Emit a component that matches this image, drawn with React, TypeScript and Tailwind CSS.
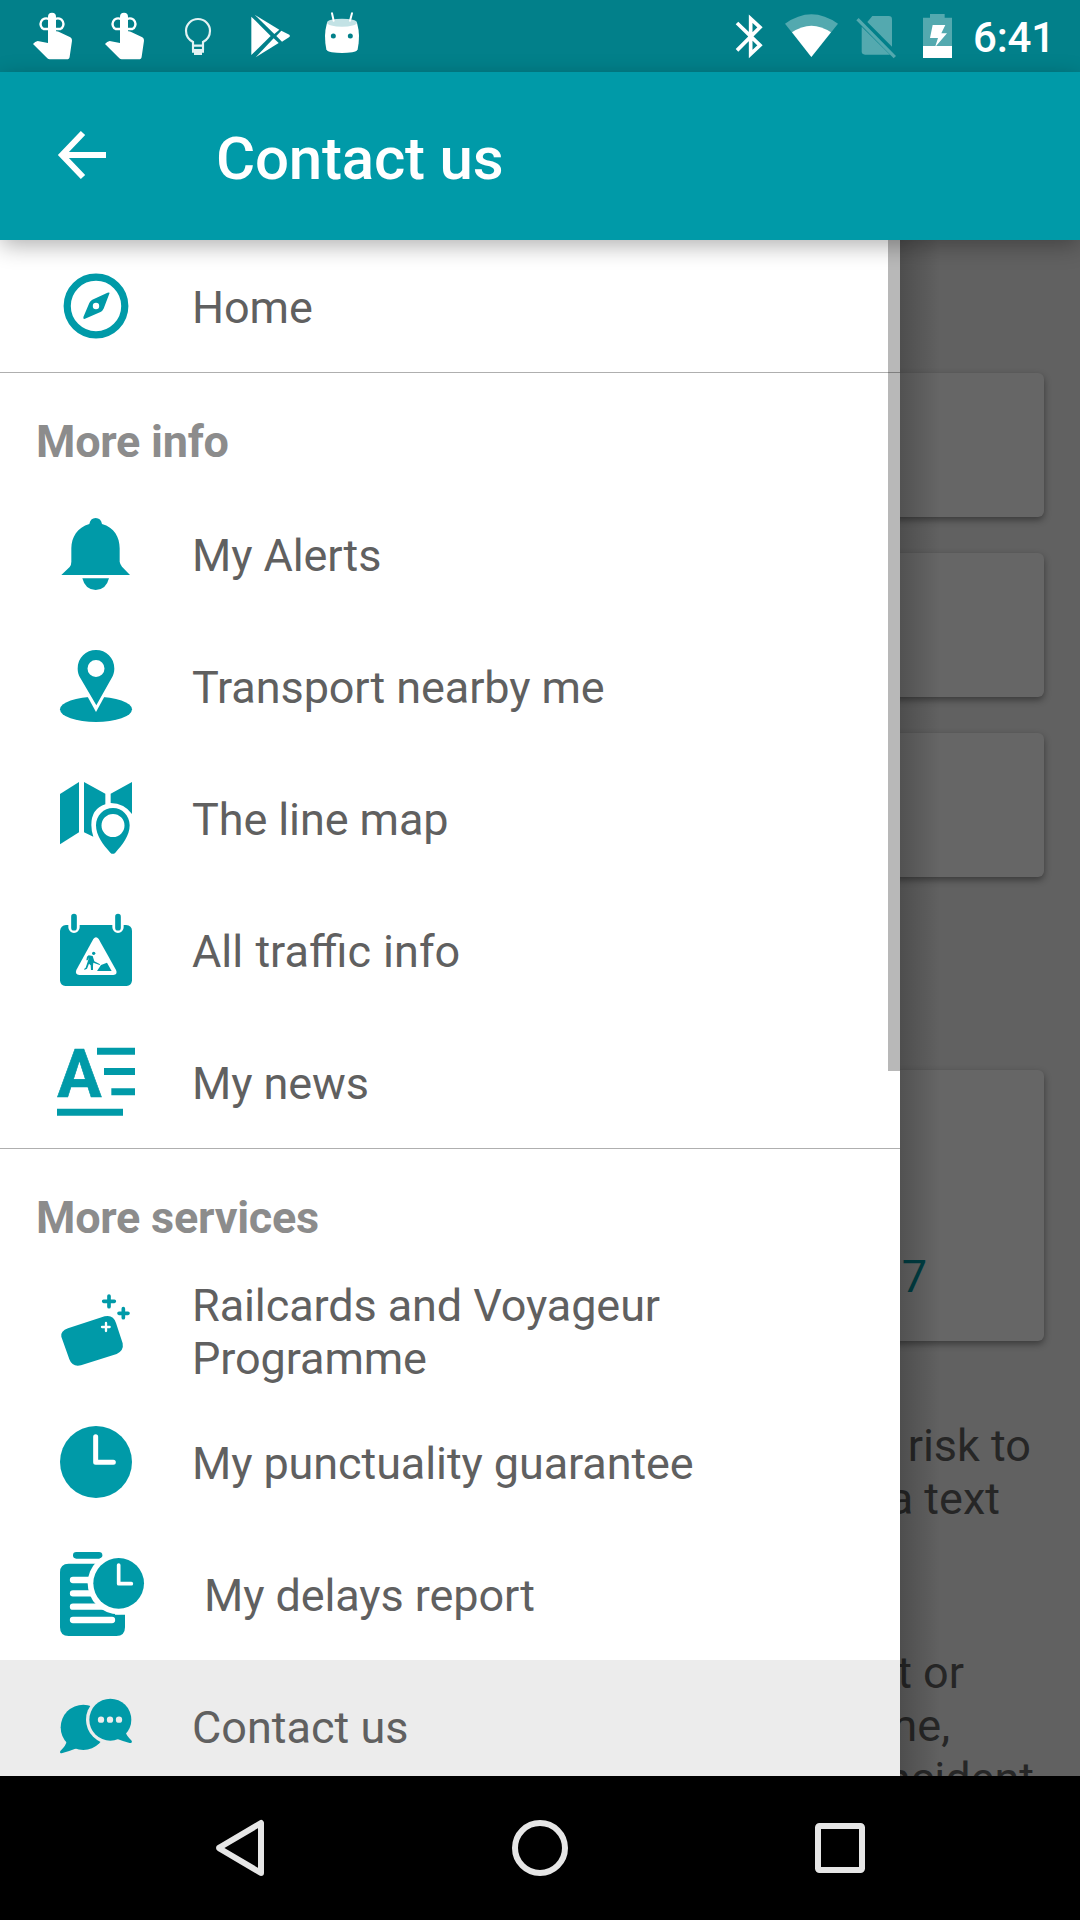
import type { ReactNode } from "react";

const TEAL = "#009aa8";

function StatusIcon({ box, className, children }: { box: string; className: string; children: ReactNode }) {
  return (
    <svg viewBox={box} className={className} fill="#fff">
      {children}
    </svg>
  );
}

const reminder = (
  <>
    <path d="M144 50Q144 38 156 38Q168 38 168 50V94Q172 93 176 95L211 112Q217 116 216 122L209 170Q208 178 200 178H149Q145 178 142 175L99 132Q105 124 113 123L144 129Z" />
    <path
      d="M146 87H131A15.500 15.500 0 1 1 146 57M166 87H181A15.500 15.500 0 1 0 166 57"
      fill="none"
      stroke="#fff"
      strokeWidth="7"
    />
  </>
);

function StatusBar() {
  return (
    <div className="flex h-[72px] shrink-0 items-center bg-[#02808a] pl-[18px]">
      <StatusIcon box="54 0 216 216" className="size-[72px]">{reminder}</StatusIcon>
      <StatusIcon box="54 0 216 216" className="size-[72px]">{reminder}</StatusIcon>
      <StatusIcon box="486 0 216 216" className="size-[72px]">
        <g fill="none" stroke="#e3f2f3" strokeWidth="6.500">
          <path d="M579 150V126Q558 114 558 92A36 35 0 0 1 630 92Q630 114 609 126V150" />
          <path d="M578 137H610M576 150H612" />
        </g>
        <path d="M576 148H612V158H606V165H582V158H576Z" fill="#e3f2f3" />
      </StatusIcon>
      <StatusIcon box="702 0 216 216" className="size-[72px]">
        <path d="M754 50L812 108L754 165Z" />
        <path d="M764 44L838 89L823 102Z" />
        <path d="M844 92L868 104Q872 108 868 111L846 125L829 108Z" />
        <path d="M821 115L836 129L767 172Z" />
      </StatusIcon>
      <StatusIcon box="918 0 216 216" className="size-[72px]">
        <path d="M981 68Q975 90 975 108Q975 130 979 148Q982 155 995 157Q1026 161 1057 157Q1070 155 1073 148Q1077 130 1077 108Q1077 90 1071 68Z" />
        <ellipse cx="1026" cy="68" rx="45" ry="12" fill="#c3e2e5" />
        <path d="M996 40L1001 62M1056 40L1050 62" stroke="#fff" strokeWidth="6" strokeLinecap="round" />
        <circle cx="1000" cy="108" r="7.5" fill="#02808a" />
        <circle cx="1051" cy="108" r="7.5" fill="#02808a" />
      </StatusIcon>

      <StatusIcon box="90 0 132 216" className="ml-[352px] h-[72px] w-[44px]">
        <path
          d="M111 69L180 136L152 162V56L180 82L111 151"
          fill="none"
          stroke="#fff"
          strokeWidth="11"
        />
      </StatusIcon>
      <StatusIcon box="222 0 222 216" className="h-[72px] w-[74px]">
        <path d="M255 71Q334 14 414 71L334 171Z" opacity=".32" />
        <path d="M276 97Q334 57 393 97L334 171Z" />
      </StatusIcon>
      <StatusIcon box="444 0 186 216" className="h-[72px] w-[62px]">
        <g opacity=".32">
          <path d="M517 48H566Q576 48 576 58V140L502 66Z" />
          <path d="M485 80L570 164H495Q485 164 485 154Z" />
          <path d="M469 61L476 54L588 168L581 175Z" />
        </g>
      </StatusIcon>
      <StatusIcon box="630 0 168 216" className="h-[72px] w-[56px]">
        <path d="M669 53H690V42H734V53H756V138H669Z" opacity=".32" />
        <path d="M669 138H756V174H669Z" />
        <path d="M698 75H736L724 100H741L705 142L714 114H690Z" />
      </StatusIcon>
      <span className="ml-[7px] pt-[2px] text-[42px] leading-[49px] font-medium tracking-[-0.2px] text-white">6:41</span>
    </div>
  );
}

function AppBar() {
  return (
    <header className="relative z-20 flex h-[168px] shrink-0 items-center bg-[#009aa8] shadow-[0_6px_22px_-1px_rgba(0,0,0,0.32)]">
      <svg viewBox="0 0 50 52" className="mt-[-2px] ml-[57px] h-[52px] w-[50px]">
        <path d="M49 26H6M26 4L5 26L26 48" fill="none" stroke="#fff" strokeWidth="6" />
      </svg>
      <h1 className="ml-[109px] pt-[6px] text-[60px] leading-[70px] font-medium tracking-[-0.2px] text-white">Contact us</h1>
    </header>
  );
}

function MenuIcon({ box, className = "size-[72px]", children }: { box: string; className?: string; children: ReactNode }) {
  return (
    <svg viewBox={box} className={className + " shrink-0 overflow-visible"} fill={TEAL}>
      {children}
    </svg>
  );
}

const icons = {
  home: (
    <MenuIcon box="0 0 72 72">
      <circle cx="36" cy="36" r="28.8" fill="none" stroke={TEAL} strokeWidth="7.2" />
      <path
        fillRule="evenodd"
        d="M49.5 23.2L43.7 38.5Q42.6 41 40.5 41.9L25 48.8Q22.8 49.3 23.4 47L29.3 33Q30.2 31 32.3 29.8L47.5 22.8Q49.8 22 49.5 23.2ZM36 32.8A3.2 3.2 0 1 0 36 39.2A3.2 3.2 0 1 0 36 32.8Z"
      />
    </MenuIcon>
  ),
  alerts: (
    <MenuIcon box="180 474 216 216">
      <path d="M268 492Q271 474 287 474Q303 474 306 492C343 502 359 532 359 565V605Q360 612 366 620L390 645H184L209 621Q214 615 214 605V565C214 532 232 502 268 492Z" />
      <path d="M247 655H327Q318 690 287 690Q256 690 247 655Z" />
    </MenuIcon>
  ),
  nearby: (
    <MenuIcon box="180 870 216 216">
      <ellipse cx="288" cy="1048" rx="108" ry="38" />
      <path d="M258 1001L288 1056L318 1001Z" fill="#fff" />
      <path
        fillRule="evenodd"
        d="M288 870C318 870 343 893 343 926C343 938 339 947 335 954L289 1036L241 954C236 945 233 937 233 926C233 893 258 870 288 870ZM288 900A25.500 25.500 0 1 0 288 951A25.500 25.500 0 1 0 288 900Z"
      />
    </MenuIcon>
  ),
  map: (
    <MenuIcon box="180 126 216 216">
      <path d="M180 162L237 126V277L180 313Z" />
      <path d="M252 126L316 161V193Q274 206 274 255Q274 273 280 290L252 277Z" />
      <path d="M332 161L396 126V222Q373 190 332 189Z" />
      <path
        fillRule="evenodd"
        d="M339 204C366 204 389 226 389 256C389 286 368 315 346 338Q338 345 331 338C309 315 288 286 288 256C288 226 311 204 339 204ZM339 222A34.500 34.500 0 1 0 339 291A34.500 34.500 0 1 0 339 222Z"
      />
    </MenuIcon>
  ),
  traffic: (
    <MenuIcon box="180 522 216 216">
      <path d="M198 555H205V562A17 17 0 0 0 239 562V555H337V562A17 17 0 0 0 371 562V555H378Q396 557 396 573V722Q394 736 380 738H196Q182 736 180 722V573Q182 557 198 555Z" />
      <path d="M222 530V563M354 530V563" stroke={TEAL} strokeWidth="17" strokeLinecap="round" />
      <path d="M280 597Q288 586 296 597L348 690Q354 703 340 705H238Q224 703 229 690Z" fill="#fff" />
      <circle cx="281" cy="640" r="5" />
      <path d="M266 646L278 648L283 664L300 673L299 675L280 668L279 677V690H273L272 676L267 671L261 686L253 690V686L257 683L264 662L267 652L263 661H259L261 650Z" />
      <path d="M291 693L303 675L321 668L335 693Z" />
    </MenuIcon>
  ),
  news: (
    <MenuIcon box="180 919 216 216">
      <text x="172" y="1071" fontSize="202" fontWeight="700" textLength="133" lengthAdjust="spacingAndGlyphs" stroke={TEAL} strokeWidth="2">
        A
      </text>
      <path d="M291 924H405V945H291ZM312 985H405V1006H312ZM334 1046H405V1067H334ZM171 1107H369V1128H171Z" />
    </MenuIcon>
  ),
  railcards: (
    <MenuIcon box="180 432 216 216">
      <path d="M204 535L314 499Q340 493 348 519L368 580Q372 602 350 612L243 646Q217 652 208 628L184 560Q181 543 204 535Z" />
      <path d="M327 438V470M311 454H343M370 476V503M357 490H384" fill="none" stroke={TEAL} strokeWidth="11" strokeLinecap="round" />
      <path d="M318 519V543M306 531H329" fill="none" stroke="#fff" strokeWidth="7" strokeLinecap="round" />
    </MenuIcon>
  ),
  punctuality: (
    <MenuIcon box="180 78 216 216">
      <circle cx="288" cy="186" r="108" />
      <path d="M287 110V187H340" fill="none" stroke="#fff" strokeWidth="15" strokeLinecap="round" strokeLinejoin="round" />
    </MenuIcon>
  ),
  delays: (
    <MenuIcon box="180 456 252 252" className="size-[84px]">
      <rect x="219" y="456" width="88" height="20" rx="10" />
      <path d="M206 491H345V644H375V682Q375 708 349 708H206Q180 708 180 682V517Q180 491 206 491Z" />
      <path d="M219 540H290M219 580H290M219 620H330M219 660H336" stroke="#fff" strokeWidth="19" strokeLinecap="round" />
      <circle cx="356" cy="550" r="93" fill="#fff" />
      <circle cx="356" cy="550" r="76" />
      <path d="M356 495V551H394" fill="none" stroke="#fff" strokeWidth="11" strokeLinecap="round" strokeLinejoin="round" />
    </MenuIcon>
  ),
  contact: (
    <MenuIcon box="180 868 216 216">
      <ellipse cx="250" cy="980" rx="68" ry="68" />
      <path d="M200 1022Q199 1034 181 1051Q178 1058 185 1058Q205 1053 230 1043Z" />
      <circle cx="331" cy="957" r="73" fill="#ececec" />
      <circle cx="331" cy="957" r="63" />
      <path d="M377 994Q379 1005 395 1020Q398 1027 389 1027Q368 1021 350 1014Z" />
      <g fill="#ececec">
        <circle cx="303" cy="957" r="9.500" />
        <circle cx="330" cy="957" r="9.500" />
        <circle cx="357" cy="957" r="9.500" />
      </g>
    </MenuIcon>
  ),
};

function MenuRow({
  icon,
  label,
  active,
  spacing = "tracking-[-0.1px]",
}: {
  icon: ReactNode;
  label: string;
  active?: boolean;
  spacing?: string;
}) {
  return (
    <div className={"flex h-[132px] shrink-0 items-center gap-[60px] pr-10 pl-[60px] " + (active ? "bg-[#ececec]" : "")}>
      {icon}
      <span className={"pt-[3px] text-[45px] leading-[53px] text-[#606060] " + spacing}>{label}</span>
    </div>
  );
}

function SectionTitle({ children }: { children: ReactNode }) {
  return (
    <div className="flex h-[116px] shrink-0 items-center border-t border-[#afafaf] pt-[22px] pl-[36px] text-[45px] leading-[53px] font-bold tracking-[-0.25px] text-[#8c8c8c]">
      {children}
    </div>
  );
}

function Drawer() {
  return (
    <nav className="absolute inset-y-0 left-0 z-10 flex w-[900px] flex-col overflow-hidden bg-white">
      <MenuRow icon={icons.home} label="Home" />
      <SectionTitle>More info</SectionTitle>
      <MenuRow icon={icons.alerts} label="My Alerts" />
      <MenuRow icon={icons.nearby} label="Transport nearby me" />
      <MenuRow icon={icons.map} label="The line map" />
      <MenuRow icon={icons.traffic} label="All traffic info" spacing="[word-spacing:1px]" />
      <MenuRow icon={icons.news} label="My news" />
      <SectionTitle>More services</SectionTitle>
      <MenuRow icon={icons.railcards} label="Railcards and Voyageur Programme" />
      <MenuRow icon={icons.punctuality} label="My punctuality guarantee" />
      <MenuRow icon={icons.delays} label="My delays report" />
      <MenuRow icon={icons.contact} label="Contact us" active spacing="tracking-normal" />
      <div className="absolute top-0 right-0 h-[831px] w-[12px] bg-black/28" />
    </nav>
  );
}

function Card({ className, children }: { className: string; children?: ReactNode }) {
  return (
    <div className={"shrink-0 rounded-[6px] bg-[#666666] shadow-[0_3px_7px_rgba(0,0,0,0.4)] " + className}>{children}</div>
  );
}

function Page() {
  return (
    <main className="flex h-full flex-col overflow-hidden bg-[#616161] pr-[36px] pl-[36px] text-[45px] leading-[53px] text-[#262626]">
      <Card className="mt-[133px] h-[144px]" />
      <Card className="mt-[36px] h-[144px]" />
      <Card className="mt-[36px] h-[144px]" />
      <Card className="mt-[193px] flex h-[271px] items-end justify-end pr-[117px] pb-[38px] text-[#003e43]">7</Card>
      <p className="mt-[78px] pr-[13px] text-right">risk to</p>
      <p className="pr-[44px] text-right">a text</p>
      <p className="mt-[121px] pr-[80px] text-right">t or</p>
      <p className="pr-[94px] text-right">me,</p>
      <p className="pr-[10px] text-right">incident</p>
    </main>
  );
}

function NavigationBar() {
  return (
    <footer className="flex h-[144px] shrink-0 items-center justify-between bg-black px-[210px]">
      <svg viewBox="0 0 60 60" className="size-[60px]" fill="none" stroke="#e6e6e6" strokeWidth="6" strokeLinejoin="round">
        <path d="M51 5V55L9.500 30.500Q8.500 30 9.500 29.500Z" />
      </svg>
      <svg viewBox="0 0 60 60" className="size-[60px]" fill="none" stroke="#e6e6e6" strokeWidth="6">
        <circle cx="30" cy="30" r="25" />
      </svg>
      <svg viewBox="0 0 60 60" className="size-[60px]" fill="none" stroke="#e6e6e6" strokeWidth="6">
        <rect x="8" y="8" width="44" height="44" rx="1.500" />
      </svg>
    </footer>
  );
}

export default function App() {
  return (
    <div className="flex h-[1920px] w-[1080px] flex-col overflow-hidden font-['Roboto',sans-serif]">
      <StatusBar />
      <AppBar />
      <div className="relative h-[1536px] shrink-0 overflow-hidden">
        <Page />
        <div className="absolute inset-y-0 left-[900px] w-[40px] bg-linear-to-r from-black/20 to-transparent" />
        <Drawer />
      </div>
      <NavigationBar />
    </div>
  );
}
